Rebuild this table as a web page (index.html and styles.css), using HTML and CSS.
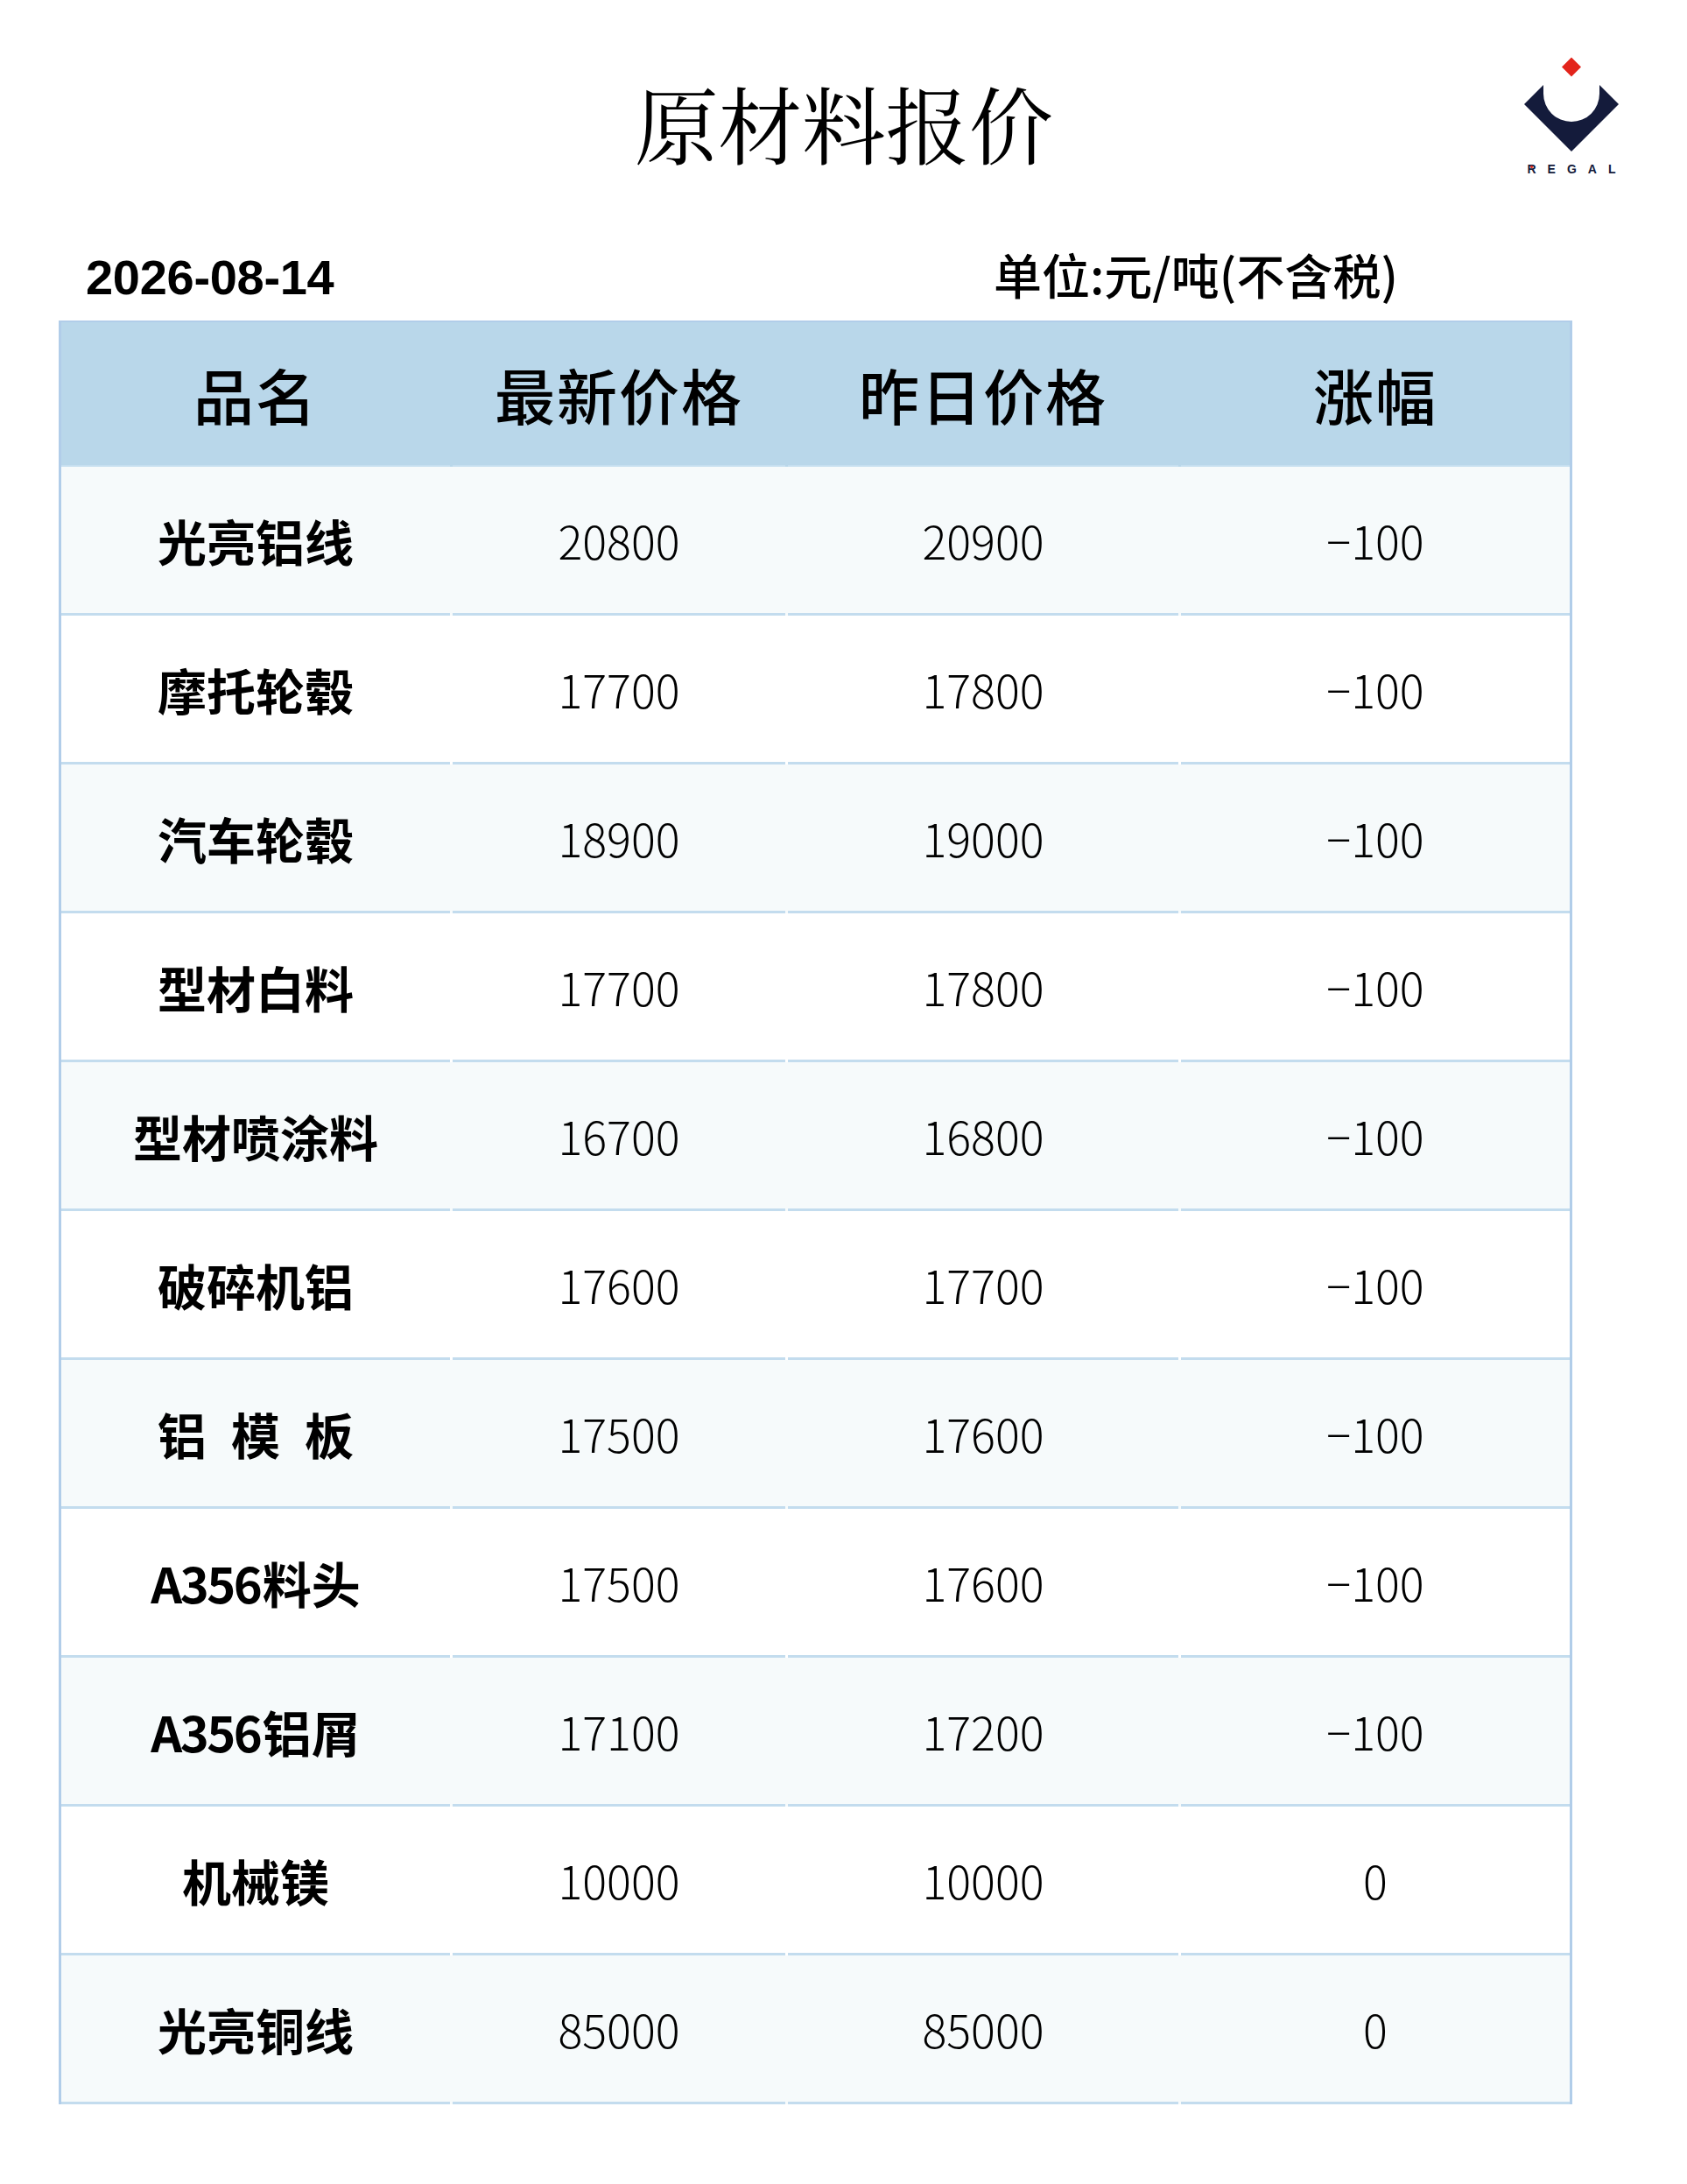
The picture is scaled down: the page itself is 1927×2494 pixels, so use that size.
FILE: index.html
```html
<!DOCTYPE html>
<html lang="zh-CN">
<head>
<meta charset="utf-8">
<title>原材料报价</title>
<link rel="stylesheet" href="styles.css">
</head>
<body>
<div class="page">
  <header class="top">
    <h1 class="title">原材料报价</h1>
    <div class="logo">
      <svg class="logo-mark" width="112" height="110" viewBox="0 0 112 110" aria-hidden="true">
        <polygon points="56,1.5 67,12.5 56,23.5 45,12.5" fill="#e3241b"/>
        <path d="M2 55 L24 33 L24 43 A32 32 0 0 0 88 43 L88 33 L110 55 L56 109 Z" fill="#141b3b"/>
      </svg>
      <div class="logo-text"><span class="logo-r">R<i class="logo-dot"></i></span>EGAL</div>
    </div>
  </header>

  <div class="meta">
    <div class="date">2026-08-14</div>
    <div class="unit">单位:元/吨(不含税)</div>
  </div>

  <div class="table">
    <div class="row head">
      <div class="cell">品名</div>
      <div class="cell">最新价格</div>
      <div class="cell">昨日价格</div>
      <div class="cell">涨幅</div>
    </div>
    <div class="row odd"><div class="cell name">光亮铝线</div><div class="cell num">20800</div><div class="cell num">20900</div><div class="cell num">−100</div></div>
    <div class="row"><div class="cell name">摩托轮毂</div><div class="cell num">17700</div><div class="cell num">17800</div><div class="cell num">−100</div></div>
    <div class="row odd"><div class="cell name">汽车轮毂</div><div class="cell num">18900</div><div class="cell num">19000</div><div class="cell num">−100</div></div>
    <div class="row"><div class="cell name">型材白料</div><div class="cell num">17700</div><div class="cell num">17800</div><div class="cell num">−100</div></div>
    <div class="row odd"><div class="cell name">型材喷涂料</div><div class="cell num">16700</div><div class="cell num">16800</div><div class="cell num">−100</div></div>
    <div class="row"><div class="cell name">破碎机铝</div><div class="cell num">17600</div><div class="cell num">17700</div><div class="cell num">−100</div></div>
    <div class="row odd"><div class="cell name">铝&ensp;模&ensp;板</div><div class="cell num">17500</div><div class="cell num">17600</div><div class="cell num">−100</div></div>
    <div class="row"><div class="cell name"><span class="code">A356</span>料头</div><div class="cell num">17500</div><div class="cell num">17600</div><div class="cell num">−100</div></div>
    <div class="row odd"><div class="cell name"><span class="code">A356</span>铝屑</div><div class="cell num">17100</div><div class="cell num">17200</div><div class="cell num">−100</div></div>
    <div class="row"><div class="cell name">机械镁</div><div class="cell num">10000</div><div class="cell num">10000</div><div class="cell num">0</div></div>
    <div class="row odd"><div class="cell name">光亮铜线</div><div class="cell num">85000</div><div class="cell num">85000</div><div class="cell num">0</div></div>
  </div>
</div>
</body>
</html>
```

FILE: styles.css
```css
html, body {
  margin: 0;
  padding: 0;
  background: #ffffff;
}

body {
  font-family: "Noto Sans CJK SC", "Noto Sans", sans-serif;
  color: #000000;
}

.page {
  width: 1927px;
  padding-bottom: 84px;
}

/* ---------- top: title + logo ---------- */
.top {
  display: grid;
  grid-template-columns: 1fr auto 1fr;
  align-items: start;
  padding-top: 64px;
}

.title {
  grid-column: 2;
  margin: 27px 0 0 0;
  font-family: "Noto Serif CJK SC", "Noto Sans CJK SC", serif;
  font-size: 96px;
  line-height: 1;
  font-weight: 400;
  letter-spacing: -0.5px;
}

.logo {
  grid-column: 3;
  justify-self: end;
  margin-right: 76px;
  width: 112px;
  display: flex;
  flex-direction: column;
  align-items: center;
}

.logo-mark {
  display: block;
}

.logo-text {
  margin-top: 12px;
  font-family: "Liberation Sans", Arial, sans-serif;
  font-weight: 700;
  font-size: 14px;
  line-height: 14px;
  letter-spacing: 13px;
  margin-right: -13px;
  color: #141b3b;
}

.logo-r {
  position: relative;
}

.logo-dot {
  position: absolute;
  left: 4px;
  top: 4px;
  width: 3px;
  height: 3px;
  border-radius: 50%;
  background: #e3241b;
}

/* ---------- meta line ---------- */
.meta {
  display: flex;
  align-items: baseline;
  justify-content: space-between;
  margin-top: 85px;
  padding: 0 330px 0 98px;
}

.date {
  font-family: "Liberation Sans", Arial, sans-serif;
  font-weight: 700;
  font-size: 56px;
  line-height: 1;
  letter-spacing: -0.3px;
}

.unit {
  font-family: "Noto Sans CJK SC", sans-serif;
  font-weight: 500;
  font-size: 55px;
  line-height: 1;
}

/* ---------- table ---------- */
.table {
  margin: 21px 0 0 67px;
  width: 1729px;
  box-sizing: border-box;
  border-left: 3px solid #b1cde9;
  border-right: 3px solid #b1cde9;
  border-top: 2px solid #b1cde9;
}

.row {
  display: grid;
  grid-template-columns: 444px 380px 446px 444px;
  column-gap: 3px;
  background: #ffffff;
}

.row.odd {
  background: #f6fafb;
}

.cell {
  height: 167px;
  border-bottom: 3px solid #c3dcee;
  display: flex;
  align-items: center;
  justify-content: center;
  white-space: pre;
}

.row.head {
  background: #b9d7ea;
}

.row.head .cell {
  height: 163px;
  border-bottom: 2px solid #c6dff0;
  font-family: "Noto Sans CJK SC", sans-serif;
  font-weight: 500;
  font-size: 69px;
  letter-spacing: 2px;
}

.cell.name {
  font-family: "Noto Sans CJK SC", sans-serif;
  font-weight: 700;
  font-size: 56px;
}

.code {
  letter-spacing: -2.5px;
  margin-right: 2.5px;
}

.cell.num {
  font-family: "Noto Sans CJK SC", sans-serif;
  font-weight: 300;
  font-size: 52px;
}
```
